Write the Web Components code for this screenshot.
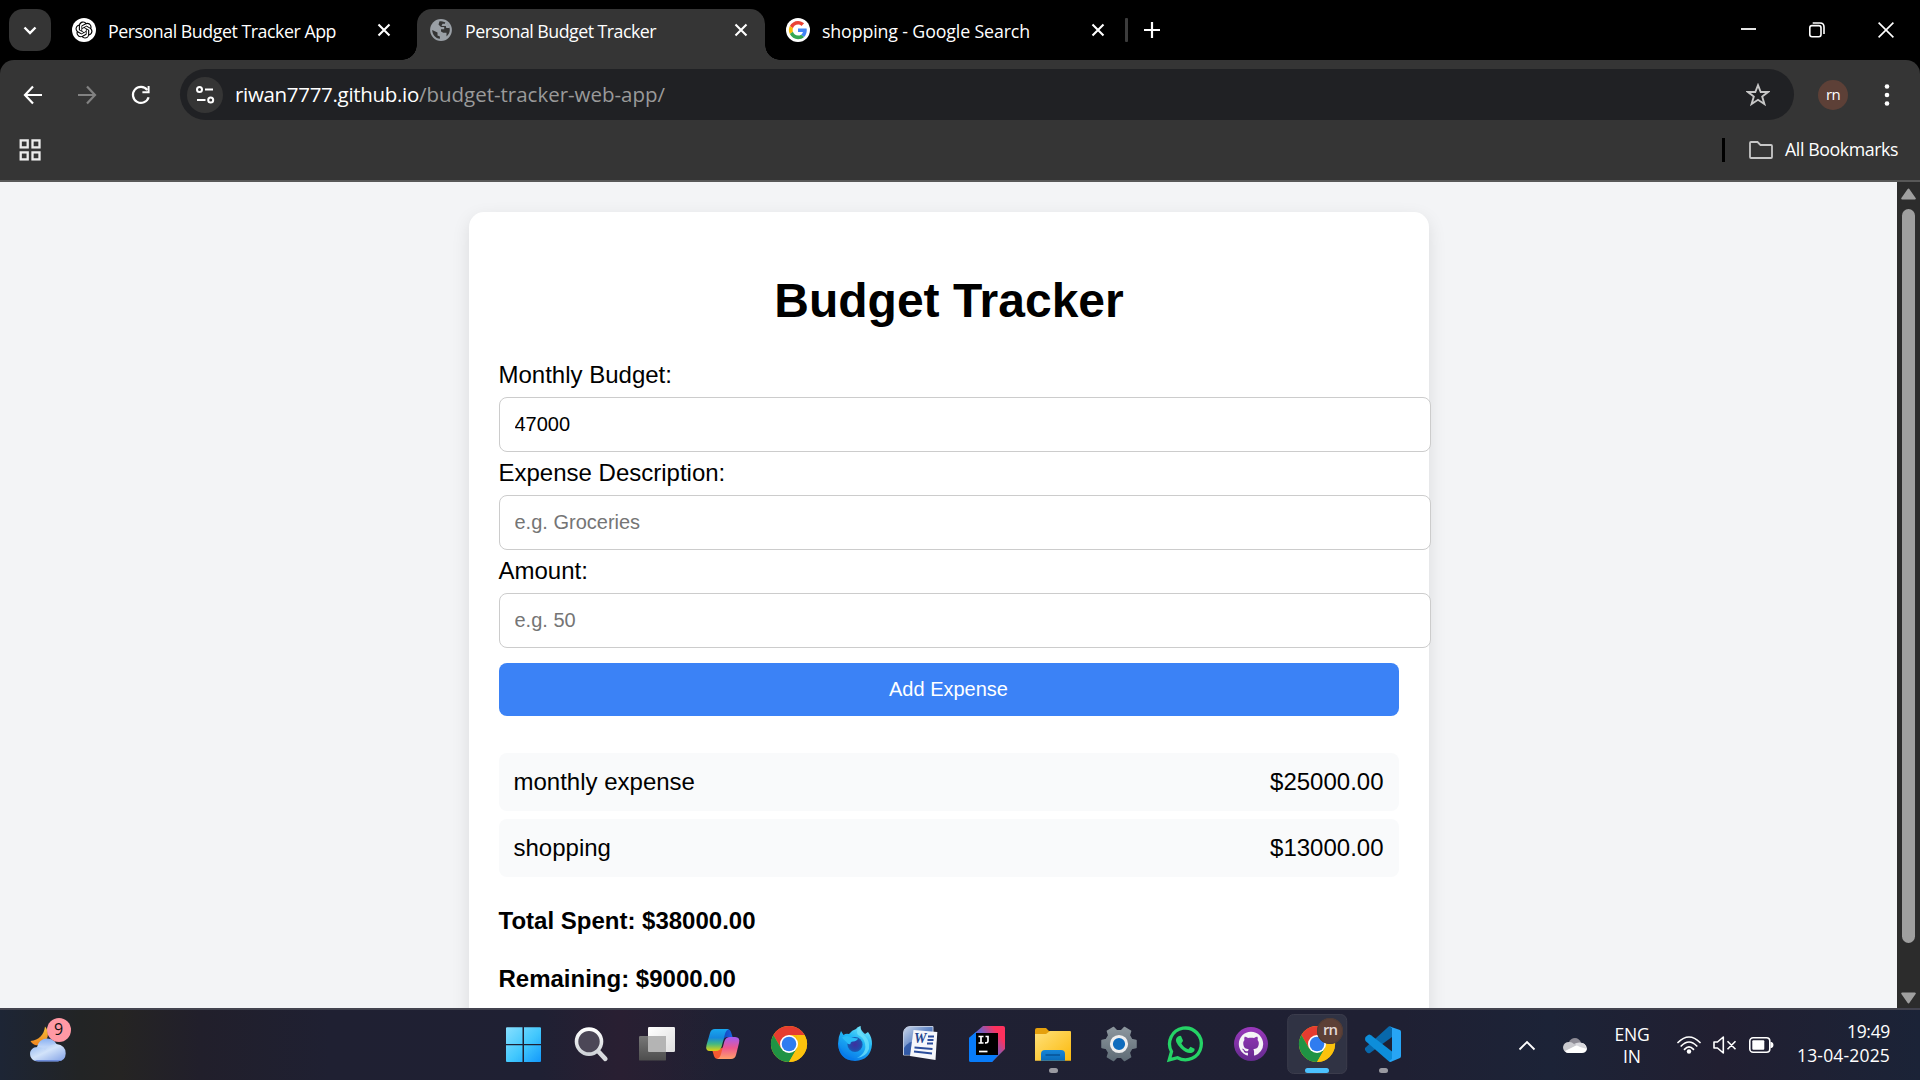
<!DOCTYPE html>
<html lang="en">
<head>
<meta charset="utf-8">
<title>Personal Budget Tracker</title>
<style>
html,body{margin:0;height:100%;overflow:hidden;background:#000}
body{font-family:"Open Sans","Noto Sans",sans-serif;color:#fff}
</style>
</head>
<body>
<desktop-screen></desktop-screen>
<script>
const define = (name, css, html, ready) => {
  const template = document.createElement('template');
  template.innerHTML = `<style>*{box-sizing:border-box}${css}</style>${html}`;
  customElements.define(name, class extends HTMLElement {
    constructor() {
      super();
      this.attachShadow({ mode: 'open' });
    }
    connectedCallback() {
      if (this.shadowRoot.childNodes.length) return;
      this.shadowRoot.append(document.importNode(template.content, true));
      if (ready) ready.call(this, this.shadowRoot);
    }
  });
};

const chromeLogo = `<circle cx="33" cy="34" r="18" fill="#fbbc04"/>
<path d="M17.4 25A18 18 0 0 1 48.6 25H33L25.2 38.5Z" fill="#e63c30"/>
<path d="M17.4 25A18 18 0 0 0 33 52L40.8 38.5L33 34L25.2 38.5Z" fill="#1f9344"/>
<path d="M48.6 25A18 18 0 0 1 33 52L40.8 38.5L41 25Z" fill="#fcc20d"/>
<circle cx="33" cy="34" r="9" fill="#fff"/><circle cx="33" cy="34" r="7.3" fill="#2f7cf0"/>`;

const gear = (() => {
  const points = [];
  for (let i = 0; i < 6; i++) {
    const a = i * 60;
    for (const [d, r] of [[-20, 13.4], [-12, 17.4], [12, 17.4], [20, 13.4]]) {
      const t = (a + d) * Math.PI / 180;
      points.push((33 + r * Math.cos(t)).toFixed(1) + ' ' + (34 + r * Math.sin(t)).toFixed(1));
    }
  }
  return 'M' + points.join('L') + 'Z';
})();

/* name: [width, height, viewBox, markup] */
const icons = {
  down: [14, 9, '0 0 14 9', '<path d="M1.5 1.5L7 7L12.5 1.5" fill="none" stroke="#fff" stroke-width="2.4"/>'],
  openai: [24, 24, '0 0 24 24', '<circle cx="12" cy="12" r="12" fill="#fff"/><path transform="translate(3.5 3.5) scale(.71)" fill="#000" d="M22.2819 9.8211a5.9847 5.9847 0 0 0-.5157-4.9108 6.0462 6.0462 0 0 0-6.5098-2.9A6.0651 6.0651 0 0 0 4.9807 4.1818a5.9847 5.9847 0 0 0-3.9977 2.9 6.0462 6.0462 0 0 0 .7427 7.0966 5.98 5.98 0 0 0 .511 4.9107 6.051 6.051 0 0 0 6.5146 2.9001A5.9847 5.9847 0 0 0 13.2599 24a6.0557 6.0557 0 0 0 5.7718-4.2058 5.9894 5.9894 0 0 0 3.9977-2.9001 6.0557 6.0557 0 0 0-.7475-7.0729zm-9.022 12.6081a4.4755 4.4755 0 0 1-2.8764-1.0408l.1419-.0804 4.7783-2.7582a.7948.7948 0 0 0 .3927-.6813v-6.7369l2.02 1.1686a.071.071 0 0 1 .038.052v5.5826a4.504 4.504 0 0 1-4.4945 4.4944zm-9.6607-4.1254a4.4708 4.4708 0 0 1-.5346-3.0137l.142.0852 4.783 2.7582a.7712.7712 0 0 0 .7806 0l5.8428-3.3685v2.3324a.0804.0804 0 0 1-.0332.0615L9.74 19.9502a4.4992 4.4992 0 0 1-6.1408-1.6464zM2.3408 7.8956a4.485 4.485 0 0 1 2.3655-1.9728V11.6a.7664.7664 0 0 0 .3879.6765l5.8144 3.3543-2.0201 1.1685a.0757.0757 0 0 1-.071 0l-4.8303-2.7865A4.504 4.504 0 0 1 2.3408 7.872zm16.5963 3.8558L13.1038 8.364 15.1192 7.2a.0757.0757 0 0 1 .071 0l4.8303 2.7913a4.4944 4.4944 0 0 1-.6765 8.1042v-5.6772a.79.79 0 0 0-.407-.667zm2.0107-3.0231l-.142-.0852-4.7735-2.7818a.7759.7759 0 0 0-.7854 0L9.409 9.2297V6.8974a.0662.0662 0 0 1 .0284-.0615l4.8303-2.7866a4.4992 4.4992 0 0 1 6.6802 4.66zM8.3065 12.863l-2.02-1.1638a.0804.0804 0 0 1-.038-.0567V6.0742a4.4992 4.4992 0 0 1 7.3757-3.4537l-.142.0805L8.704 5.459a.7948.7948 0 0 0-.3927.6813zm1.0976-2.3654l2.602-1.4998 2.6069 1.4998v2.9994l-2.5974 1.4997-2.6067-1.4997Z"/>'],
  globe: [22, 22, '0 0 22 22', '<circle cx="11" cy="11" r="10.9" fill="#9aa0a6"/><path d="M9.5 2.3 8.500 5.500l2.500 2.400h3.200v2.300H11v2.300l2.300 1.200h3.200v3.800c2-1.700 3.300-4 3.300-6.700C19.800 6 16 2.200 11 2.200ZM2.200 10.900 7.500 13.600v2.800l2.400 1.200v2.100C5.500 19.300 2.300 15.500 2.200 10.900Z" fill="#353535"/><path d="M12 2.200h3v2.600h-2.500l-1 2.100h4.300l.5 2h3.500C19 5 16 2.500 12 2.200Z" fill="#9aa0a6"/>'],
  google: [24, 24, '0 0 24 24', '<circle cx="12" cy="12" r="12" fill="#fff"/><g transform="translate(2.9 2.9) scale(.38)"><path fill="#EA4335" d="M24 9.5c3.54 0 6.71 1.22 9.21 3.6l6.85-6.85C35.9 2.38 30.47 0 24 0 14.62 0 6.51 5.38 2.56 13.22l7.98 6.19C12.43 13.72 17.74 9.5 24 9.5z"/><path fill="#4285F4" d="M46.98 24.55c0-1.57-.15-3.09-.38-4.55H24v9.02h12.94c-.58 2.96-2.26 5.48-4.78 7.18l7.73 6c4.51-4.18 7.09-10.36 7.09-17.65z"/><path fill="#FBBC05" d="M10.53 28.59a14.5 14.5 0 0 1 0-9.18l-7.98-6.19a24 24 0 0 0 0 21.56z"/><path fill="#34A853" d="M24 48c6.48 0 11.93-2.13 15.89-5.81l-7.73-6c-2.15 1.45-4.92 2.3-8.16 2.3-6.26 0-11.57-4.22-13.47-9.91l-7.98 6.19C6.51 42.62 14.62 48 24 48z"/></g>'],
  close: [14, 14, '0 0 14 14', '<path d="M1.5 1.5L12.5 12.5M12.5 1.5L1.5 12.5" stroke="#fff" stroke-width="2.1"/>'],
  plus: [16, 16, '0 0 16 16', '<path d="M8 0V16M0 8H16" stroke="#fff" stroke-width="2.2"/>'],
  min: [15, 15, '0 0 15 15', '<path d="M0 7H15" stroke="#fff" stroke-width="1.8"/>'],
  restore: [16, 16, '0 0 16 16', '<rect x=".8" y="3.6" width="11.2" height="11.2" rx="2.2" fill="none" stroke="#fff" stroke-width="1.6"/><path d="M3.7 1H11Q15 1 15 5V12" fill="none" stroke="#fff" stroke-width="1.6"/>'],
  winclose: [16, 16, '0 0 16 16', '<path d="M.6.6L15.4 15.4M15.4.6L.6 15.4" stroke="#fff" stroke-width="1.6"/>'],
  back: [20, 20, '0 0 20 20', '<path d="M19 10H2.5M10 1.5L2 10L10 18.5" fill="none" stroke="#fff" stroke-width="2.2"/>'],
  forward: [20, 20, '0 0 20 20', '<path d="M1 10H17.5M10 1.5L18 10L10 18.5" fill="none" stroke="#828282" stroke-width="2.2"/>'],
  reload: [20, 20, '0 0 20 20', '<path d="M17.6 12.2A8 8 0 1 1 16.3 5" fill="none" stroke="#fff" stroke-width="2.2"/><path d="M18.6 1V8.2H11.4V6.2H16.6V1Z" fill="#fff"/>'],
  tune: [20, 20, '0 0 20 20', '<g fill="none" stroke="#fff" stroke-width="2"><circle cx="4.5" cy="4.500" r="2.500"/><circle cx="15.700" cy="15" r="2.500"/><path d="M10 4.500H18M2 15H10.500"/></g>'],
  star: [24, 24, '0 0 24 24', '<path d="M12 2.2L14.7 9H22L16.2 13.6L18.4 21L12 16.8L5.6 21L7.8 13.6L2 9H9.3Z" fill="none" stroke="#c7c7c7" stroke-width="1.9"/>'],
  dots: [6, 24, '0 0 6 24', '<g fill="#fff"><circle cx="3" cy="3.5" r="2.3"/><circle cx="3" cy="12" r="2.3"/><circle cx="3" cy="20.5" r="2.3"/></g>'],
  apps: [22, 22, '0 0 22 22', '<g fill="none" stroke="#ececec" stroke-width="2.3"><rect x="1.7" y="1.4" width="7" height="7"/><rect x="13.5" y="1.4" width="7" height="7"/><rect x="1.7" y="13.4" width="7" height="7"/><rect x="13.5" y="13.4" width="7" height="7"/></g>'],
  folder: [24, 18, '0 0 24 18', '<path d="M1 16V2Q1 1 2 1H8.5L11.5 4H22Q23 4 23 5V16Q23 17 22 17H2Q1 17 1 16Z" fill="none" stroke="#c7c7c7" stroke-width="1.8"/>'],
  scrollup: [15, 12, '0 0 15 12', '<path d="M7.5 1.5L13.8 10.5H1.2Z" fill="#9f9f9f" stroke="#9f9f9f" stroke-width="2" stroke-linejoin="round"/>'],
  scrolldown: [15, 12, '0 0 15 12', '<path d="M7.5 10.5L13.8 1.5H1.2Z" fill="#9f9f9f" stroke="#9f9f9f" stroke-width="2" stroke-linejoin="round"/>'],
  weather: [40, 38, '0 0 40 38', '<defs><linearGradient id="m" x2="0" y2="1"><stop stop-color="#f5c23c"/><stop offset="1" stop-color="#f0851d"/></linearGradient><linearGradient id="c" x2="0" y2="1"><stop stop-color="#89b0f2"/><stop offset=".5" stop-color="#c0d6f8"/><stop offset="1" stop-color="#b9cff6"/></linearGradient><linearGradient id="d" x1="0" x2="1" y2="1"><stop stop-color="#8eb4ef"/><stop offset=".45" stop-color="#d2e3fa"/><stop offset="1" stop-color="#7f9fe5"/></linearGradient></defs><path d="M15 2.500C20 8 19 18 9 21Q3 22 .5 17C9 16 14 11 15 2.500Z" fill="url(#m)"/><path d="M7 23Q9 14.500 17.500 14.500Q26 15 28 24L18 31Z" fill="url(#c)"/><path d="M8 37.300C-2.500 37 -2.500 23 7.500 23Q12 23 15 26Q19 20 26.500 20Q35.700 21 35.700 29.500Q35.500 37 28 37.300Z" fill="url(#d)"/><path d="M4 36H32L28 37.400H8Z" fill="#6d8cda"/>'],
  start: [66, 70, '0 0 66 70', '<defs><linearGradient id="g" x1="14" y1="17" x2="49" y2="52" gradientUnits="userSpaceOnUse"><stop stop-color="#88e0ff"/><stop offset=".55" stop-color="#41c7fd"/><stop offset="1" stop-color="#1298fb"/></linearGradient></defs><path fill="url(#g)" d="M15 17.2H30.5V34H14V18.2Q14 17.2 15 17.2ZM32 17.2H48Q49 17.2 49 18.2V34H32ZM14 35.3H30.5V52H15Q14 52 14 51ZM32 35.3H49V51Q49 52 48 52H32Z"/>'],
  search: [66, 70, '0 0 66 70', '<defs><linearGradient id="s" x2="0" y2="1"><stop stop-color="#fff"/><stop offset="1" stop-color="#cfd3d8"/></linearGradient></defs><path d="M39.5 40.5L47.3 48.8" stroke="#d8dade" stroke-width="4.6" stroke-linecap="round"/><circle cx="31" cy="31.6" r="12.5" fill="#4c4757" stroke="url(#s)" stroke-width="3.6"/>'],
  tasks: [66, 70, '0 0 66 70', '<defs><linearGradient id="w" x2="1" y2="1"><stop stop-color="#fff"/><stop offset="1" stop-color="#dedede"/></linearGradient><linearGradient id="q" x2="0" y2="1"><stop stop-color="#777"/><stop offset="1" stop-color="#4d4d4d"/></linearGradient></defs><rect x="24" y="17" width="27" height="25" rx="1.2" fill="url(#w)"/><rect x="15" y="26" width="27" height="24.6" rx="1.2" fill="url(#q)"/><path d="M24 26H42V42H25Q24 42 24 41Z" fill="#b4b4b4"/>'],
  copilot: [66, 70, '0 0 66 70', '<defs><linearGradient id="a" x2="0" y2="1"><stop stop-color="#18a7ef"/><stop offset=".4" stop-color="#1588dd"/><stop offset=".68" stop-color="#42b883"/><stop offset="1" stop-color="#e1d30f"/></linearGradient><linearGradient id="b" x2="0" y2="1"><stop stop-color="#a45cf2"/><stop offset=".5" stop-color="#ed588e"/><stop offset="1" stop-color="#ffa06a"/></linearGradient><linearGradient id="e" x2="1"><stop stop-color="#153fb9"/><stop offset="1" stop-color="#1766e0"/></linearGradient></defs><path d="M32 19H37Q40 19 41 22L42.6 27H38Q34 27 33 31Z" fill="url(#e)"/><path d="M25 41L34 37L31 49H28Q25 49 24 46L22.5 41Z" fill="#f65931"/><path d="M25 19H39Q36 20 35 24L31.500 37Q30 41 26 41H20Q15 41 16.500 35L20 23Q21 19 25 19Z" fill="url(#a)"/><path d="M41 49H27Q30 48 31 44L34.500 31Q36 27 40 27H45Q50.500 27 49 33L46 45Q45 49 41 49Z" fill="url(#b)"/>'],
  chrome: [66, 70, '0 0 66 70', chromeLogo],
  firefox: [66, 70, '0 0 66 70', '<defs><linearGradient id="f" x1=".8" y1="0" x2=".3" y2="1"><stop stop-color="#7ee9f9"/><stop offset=".4" stop-color="#22b8f6"/><stop offset="1" stop-color="#0574e8"/></linearGradient><radialGradient id="h"><stop stop-color="#3f2f9e"/><stop offset=".7" stop-color="#2448a8"/><stop offset="1" stop-color="#1560b8"/></radialGradient></defs><path d="M19 21L21.5 25Q24 23 27 24Q30 20 34 19Q35 17 38.500 16Q38 20 43 24L46 22Q50 27 50 34Q49 50 33 51Q17 50 16 34Q16 27 19 21Z" fill="url(#f)"/><path d="M38.500 16Q37.500 22 43 26Q48 31 47 39Q44 47 35 48Q46 42 42.500 32Q41 27 36 25Q33 20 38.500 16Z" fill="#6fe3fb" opacity=".75"/><circle cx="33" cy="34.500" r="7.600" fill="url(#h)"/><path d="M20 27.500Q25 24.500 28.500 27.500L36 28.500Q35 31 31 31.500Q28 32 28.500 34Q26 35 24.500 32Q22 30 20 27.500Z" fill="#2abcf8"/><path d="M16 32Q20 47 34 49Q26 53 20 45Q16 40 16 32Z" fill="#057ceb" opacity=".6"/>'],
  word: [66, 70, '0 0 66 70', '<defs><linearGradient id="v" x2="1" y2="1"><stop stop-color="#cdd8ea"/><stop offset=".45" stop-color="#668ac8"/><stop offset="1" stop-color="#173f91"/></linearGradient></defs><path d="M22 16.5H45V45H15.5V23Q16 17 22 16.5Z" fill="url(#v)" stroke="#c0cbe0" stroke-width="1"/><path d="M16 38Q20 31 31 30V45H16Z" fill="#1f499b" opacity=".7"/><path d="M25.5 20L49.300 22L47.500 50L22 46Z" fill="#f6f7fb"/><path d="M40 26.500H46M39.500 30H45.500M39 33.500H45M26.500 37.500L44.500 39M26 41.500L44 43.500" stroke="#2b4d9b" stroke-width="2"/>'],
  idea: [66, 70, '0 0 66 70', '<defs><linearGradient id="i" x1=".15" y1=".7" x2="1" y2=".1"><stop stop-color="#087cfa"/><stop offset=".45" stop-color="#7560c2"/><stop offset=".8" stop-color="#fe315d"/></linearGradient></defs><path d="M29 16H49Q51 16 51 18V39L38 52H17Q15 52 15 50V28Z" fill="url(#i)"/><path d="M15 28L22 22V45H44L38 52H17Q15 52 15 50Z" fill="#087cfa"/><rect x="22" y="23" width="22" height="22"/><path d="M24.5 26.5H29.5M27 26.5V33M24.5 33H29.5M31.5 26.5H34V31Q34 33 31 32.8" fill="none" stroke="#fff" stroke-width="1.7"/><path d="M25 41.5H33.5" stroke="#fff" stroke-width="1.7"/>'],
  explorer: [66, 70, '0 0 66 70', '<defs><linearGradient id="j" x2="1" y2="1"><stop stop-color="#ffe17a"/><stop offset="1" stop-color="#fbb90c"/></linearGradient><linearGradient id="k" x2="0" y2="1"><stop stop-color="#1686d8"/><stop offset="1" stop-color="#0b6bb9"/></linearGradient></defs><path d="M15 20Q15 18 17 18H26L29 21H44V27L15 27Z" fill="#e5a00c"/><path d="M15 24H26L30 21H50Q51 21 51 22V50.7H15Z" fill="url(#j)"/><path d="M21 50.7V44Q21 40 25 40H41Q45 40 45 44V50.7Z" fill="url(#k)"/><path d="M25.5 45H40" stroke="#064f93" stroke-width="1.4"/><rect x="29" y="58" width="9" height="5" rx="2.5" fill="#9a9aa1"/>'],
  settings: [66, 70, '0 0 66 70', `<defs><linearGradient id="n" x2="0" y2="1"><stop stop-color="#8c969d"/><stop offset="1" stop-color="#5f6c76"/></linearGradient></defs><path d="${gear}" fill="url(#n)" stroke="url(#n)" stroke-width="1.500" stroke-linejoin="round"/><circle cx="33" cy="34" r="7.600" fill="#0f6cbd" stroke="#eee" stroke-width="3"/>`],
  whatsapp: [66, 70, '0 0 66 70', '<path d="M17.2 49.9L19.5 41.6A15.9 15.9 0 1 1 25.500 47.700Z" fill="none" stroke="#25d366" stroke-width="3.300"/><path d="M26.500 26.200Q28 25.400 29 26L31 30.500Q31 31.500 29.300 33.200Q31.500 37.600 36.300 39.200L38.500 36.800L42.500 38.800Q43 41.500 40.500 42.500Q35.500 44.500 29 38.500Q22 31.500 24.500 28Q25.300 26.600 26.500 26.200Z" fill="#25d366"/>'],
  github: [66, 70, '0 0 66 70', '<defs><linearGradient id="o" x2="0" y2="1"><stop stop-color="#9a38bc"/><stop offset="1" stop-color="#642b8e"/></linearGradient></defs><circle cx="33" cy="34" r="17" fill="url(#o)"/><path transform="translate(20.800 21.800) scale(1.525)" fill="#f4f4f6" d="M8 0C3.58 0 0 3.58 0 8c0 3.54 2.29 6.53 5.47 7.59.4.07.55-.17.55-.38 0-.19-.01-.82-.01-1.49-2.01.37-2.53-.49-2.69-.94-.09-.23-.48-.94-.82-1.13-.28-.15-.68-.52-.01-.53.63-.01 1.08.58 1.23.82.72 1.21 1.87.87 2.33.66.07-.52.28-.87.51-1.07-1.78-.2-3.64-.89-3.64-3.95 0-.87.31-1.59.82-2.15-.08-.2-.36-1.02.08-2.12 0 0 .67-.21 2.2.82.64-.18 1.32-.27 2-.27s1.36.09 2 .27c1.53-1.04 2.2-.82 2.2-.82.44 1.1.16 1.92.08 2.12.51.56.82 1.27.82 2.15 0 3.07-1.87 3.75-3.65 3.95.29.25.54.73.54 1.48 0 1.07-.01 1.93-.01 2.2 0 .21.15.46.55.38A8.013 8.013 0 0 0 16 8c0-4.42-3.58-8-8-8z"/>'],
  chromeactive: [66, 70, '0 0 66 70', `<rect x="3.7" y="4.5" width="59" height="59" rx="6" fill="#303344" stroke="#3b3c4c"/>${chromeLogo}<rect x="21" y="58" width="24" height="5" rx="2.5" fill="#4cc2ff"/>`],
  vscode: [66, 70, '0 0 66 70', '<path d="M15 38L39 16.3L42 17V27L20 43Q18 44 16.5 42L15 40Z" fill="#0868ab"/><path d="M15.500 27L18 25Q19.300 24 21 25.300L42 41.500V51L39 51.500L15.500 31Q14.500 29 15.500 27Z" fill="#0d8eda"/><path d="M39 16.300L50 20Q51 20.500 51 22V46Q51 47.500 50 48L40.500 52Q39 51.500 39 51L42 49V18Z" fill="#27a5f5"/><rect x="29" y="58" width="9" height="5" rx="2.500" fill="#9a9aa1"/>'],
  chevron: [18, 11, '0 0 18 11', '<path d="M1.5 9.5L9 2L16.5 9.5" fill="none" stroke="#fff" stroke-width="1.8"/>'],
  onedrive: [24, 17, '0 0 24 17', '<path d="M6 5Q8 1 12 1Q16 1 18 5.5L12 10Z" fill="#8d8b95"/><path d="M5 16Q0 15 0 10Q1 5 6 5Q8.5 4.5 11 7L17 10L5 16Z" fill="#cacacf"/><path d="M2 14L15 7.5Q18 5 21.5 7Q24 9 24 12Q23 16 19 16H5Q3 16 2 14Z" fill="#fff"/><path d="M11 7Q14 5 17.5 5.5Q20.5 6 21.5 7.5L24 12L17 10Z" fill="#d9d9de"/>'],
  wifi: [24, 18, '0 0 24 18', '<g fill="none" stroke="#fff" stroke-width="1.7" stroke-linecap="round"><path d="M1 6.5Q12-4.5 23 6.5M4.2 10Q12 2 19.8 10M7.5 13.3Q12 8.5 16.5 13.3"/></g><circle cx="12" cy="15.5" r="2.2" fill="#fff"/>'],
  mute: [24, 18, '0 0 24 18', '<path d="M1 6H4.5L10.3 1V17L4.5 12H1ZM14.5 5.2L22.5 13.2M22.5 5.2L14.5 13.2" fill="none" stroke="#fff" stroke-width="1.6" stroke-linejoin="round"/>'],
  battery: [25, 16, '0 0 25 16', '<rect x=".8" y=".8" width="20" height="14.4" rx="3.3" fill="none" stroke="#fff" stroke-width="1.6"/><rect x="3.3" y="3.3" width="12" height="9.4" rx="1" fill="#fff"/><path d="M21.5 5H22.5Q24.5 5.500 24.500 8T22.500 11H21.500Z" fill="#fff"/>']
};

define('ui-icon', ':host{display:block;flex:none}svg{display:block}', '', function (root) {
  const [w, h, box, body] = icons[this.getAttribute('name')];
  const holder = document.createElement('template');
  holder.innerHTML = `<svg width="${w}" height="${h}" viewBox="${box}">${body}</svg>`;
  root.append(holder.content);
});

/* A single line of text tracked out or in to fill the given width. */
define('fit-text', ':host{display:inline-block;white-space:pre;flex:none}span{display:inline-block}', '<span><slot></slot></span>', function (root) {
  const span = root.querySelector('span');
  const target = +this.getAttribute('w');
  const natural = span.getBoundingClientRect().width;
  if (natural) span.style.letterSpacing = (target - natural) / this.textContent.length + 'px';
});

define('browser-tab', `
:host{display:flex;align-items:center;height:51px;width:348px;padding:0 17px 9px 12px;border-radius:15px 15px 0 0;font-size:17.8px;position:relative;margin-top:9px}
:host([active]){background:#353535}
:host([active])::before,:host([active])::after{content:"";position:absolute;bottom:0;width:15px;height:15px}
:host([active])::before{left:-15px;background:radial-gradient(circle at 0 0,transparent 14.5px,#353535 15px)}
:host([active])::after{right:-15px;background:radial-gradient(circle at 100% 0,transparent 14.5px,#353535 15px)}
.label{flex:1;margin-left:12px;line-height:24px;padding-top:2px}
.icon{width:24px;display:grid;place-items:center}`,
'<div class="icon"></div><div class="label"><slot></slot></div><ui-icon name="close"></ui-icon>',
function (root) {
  const icon = document.createElement('ui-icon');
  icon.setAttribute('name', this.getAttribute('icon'));
  root.querySelector('.icon').append(icon);
});
</script>
<script>
define('tab-strip', `
:host{display:flex;height:60px;background:#000;align-items:flex-start}
.menu{width:42px;height:42px;margin:9px 0 0 9px;border-radius:14px;background:#353535;display:grid;place-items:center}
browser-tab{margin-left:9px}
.rule{width:3px;height:24px;background:#3c3c3c;margin:18px 0 0 3px;border-radius:1px}
.plus{margin:22px 0 0 16px}
.win{display:flex;gap:53px;margin:22px 26px 0 auto}`,
`<div class="menu"><ui-icon name="down"></ui-icon></div>
<browser-tab icon="openai"><fit-text w="228">Personal Budget Tracker App</fit-text></browser-tab>
<browser-tab icon="globe" active><fit-text w="191">Personal Budget Tracker</fit-text></browser-tab>
<browser-tab icon="google"><fit-text w="208">shopping - Google Search</fit-text></browser-tab>
<div class="rule"></div><ui-icon class="plus" name="plus"></ui-icon>
<div class="win"><ui-icon name="min"></ui-icon><ui-icon name="restore"></ui-icon><ui-icon name="winclose"></ui-icon></div>`);

define('nav-bar', `
:host{display:block;background:#000}
.bar{display:flex;height:69px;background:#353535;border-radius:14px 14px 0 0;align-items:center;padding:0 30px 0 23px}
.arrows{display:flex;gap:34px;width:157px}
.omni{width:1614px;height:51px;border-radius:26px;background:#202124;display:flex;align-items:center;padding:0 24px 0 7px}
.site{width:36px;height:36px;border-radius:50%;background:#353535;display:grid;place-items:center;margin-right:12px}
.url{flex:1;font-size:20.5px;line-height:30px;display:flex;padding-bottom:1px}
.path{color:#9a9a9a}
.avatar{width:30px;height:30px;border-radius:50%;background:#5d4037;font-size:15px;line-height:28px;text-align:center;margin:0 36px 0 24px}`,
`<div class="bar"><div class="arrows"><ui-icon name="back"></ui-icon><ui-icon name="forward"></ui-icon><ui-icon name="reload"></ui-icon></div>
<div class="omni"><div class="site"><ui-icon name="tune"></ui-icon></div>
<div class="url"><fit-text w="184">riwan7777.github.io</fit-text><fit-text class="path" w="246">/budget-tracker-web-app/</fit-text></div>
<ui-icon name="star"></ui-icon></div>
<div class="avatar"><fit-text w="14">rn</fit-text></div><ui-icon name="dots"></ui-icon></div>`);

define('bookmark-bar', `
:host{display:flex;box-sizing:border-box;height:53px;background:#353535;align-items:center;padding:0 22px 10px 19px;border-bottom:2px solid #585858;font-size:17.8px}
.rule{width:3px;height:24px;background:#000;margin-left:auto;margin-right:24px}
fit-text{margin:0 0 2px 12px;line-height:26px}`,
`<ui-icon name="apps"></ui-icon><div class="rule"></div><ui-icon name="folder"></ui-icon><fit-text w="113">All Bookmarks</fit-text>`);

define('form-field', `
:host{display:block;height:98px}
label{display:block;height:36px;font-size:24px;line-height:28px}
input{display:block;box-sizing:content-box;width:100%;height:23px;padding:15px;border:1px solid #ccc;border-radius:8px;font:20px/23px "Liberation Sans",sans-serif;color:#000;background:#fff;outline:0}
input::placeholder{color:#757575}`,
'<label></label><input>', function (root) {
  root.querySelector('label').textContent = this.getAttribute('label');
  const input = root.querySelector('input');
  input.value = this.getAttribute('value') || '';
  input.placeholder = this.getAttribute('placeholder') || '';
});

define('expense-item', `
:host{display:flex;box-sizing:border-box;justify-content:space-between;height:58px;padding:15px;background:#f9fafb;border-radius:8px;margin-bottom:8px;line-height:28px}`,
'<slot></slot><slot name="amount"></slot>');

define('budget-card', `
:host{display:block;box-sizing:border-box;width:960px;height:900px;padding:30px;background:#fff;border-radius:15px;box-shadow:0 6px 18px rgba(0,0,0,.1);font:24px "Liberation Sans",sans-serif;color:#000}
h1{font-size:48px;line-height:55px;margin:31px 0 33px;padding-left:1px;text-align:center}
button{display:block;width:900px;height:53px;margin:8px 0 37px;border:0;border-radius:8px;background:#3b82f6;color:#fff;font:20px "Liberation Sans",sans-serif;padding:0}
p{margin:0;font-weight:700;line-height:28px}
.totals{display:flex;flex-direction:column;gap:30px;margin-top:30px}`,
`<h1>Budget Tracker</h1>
<form-field label="Monthly Budget:" value="47000"></form-field>
<form-field label="Expense Description:" placeholder="e.g. Groceries"></form-field>
<form-field label="Amount:" placeholder="e.g. 50"></form-field>
<button>Add Expense</button>
<expense-item><span>monthly expense</span><span slot="amount">$25000.00</span></expense-item>
<expense-item><span>shopping</span><span slot="amount">$13000.00</span></expense-item>
<div class="totals"><p>Total Spent: $38000.00</p><p>Remaining: $9000.00</p></div>`);

define('scroll-rail', `
:host{display:flex;box-sizing:border-box;flex-direction:column;align-items:center;width:23px;height:826px;background:#2c2c2c;padding:6px 0 4px}
.thumb{width:13px;height:734px;border-radius:7px;background:#9f9f9f;margin:9px 0 auto}`,
'<ui-icon name="scrollup"></ui-icon><div class="thumb"></div><ui-icon name="scrolldown"></ui-icon>');

define('page-view', `
:host{display:flex;height:826px;overflow:hidden;background:#f3f4f6}
main{flex:1;height:826px;overflow:hidden;display:flex;justify-content:center;align-items:flex-start;padding-top:30px}`,
'<main><budget-card></budget-card></main><scroll-rail></scroll-rail>');

define('weather-widget', `
:host{display:block;width:40px;height:38px;position:relative;margin:14px 0 0 30px}
.badge{position:absolute;left:16.5px;top:-6px;width:24px;height:24px;border-radius:50%;background:#ff99a4;color:#111;font-size:16px;line-height:23px;text-align:center}`,
'<ui-icon name="weather"></ui-icon><div class="badge">9</div>');

define('task-button', `
:host{display:block;width:66px;height:70px;position:relative}
.badge{position:absolute;left:33px;top:8px;width:26px;height:26px;border-radius:50%;background:#5d4037;box-shadow:inset 0 0 0 1px #503c36;color:#e4d9d6;font-size:15px;font-weight:600;line-height:22px;text-align:center;letter-spacing:-1px}
.w{position:absolute;left:26px;top:21px;font:italic 700 14px/16px "Liberation Serif",serif;color:#23468f}`,
'', function (root) {
  const name = this.getAttribute('icon');
  const icon = document.createElement('ui-icon');
  icon.setAttribute('name', name);
  root.append(icon);
  if (name === 'chromeactive' || name === 'word') {
    const mark = document.createElement('div');
    mark.className = name === 'word' ? 'w' : 'badge';
    mark.textContent = name === 'word' ? 'W' : 'rn';
    root.append(mark);
  }
});

define('system-tray', `
:host{display:flex;box-sizing:border-box;height:70px;align-items:center;margin-left:auto;font-size:17.5px;line-height:24px;padding-right:30px}
.lang{width:60px;text-align:center;margin:0 15px 0 15px;line-height:22px}
.status{display:flex;gap:12px;align-items:center}
.clock{text-align:right;width:94px;margin-left:22px;padding-bottom:4px}
.lang,.clock{display:flex;flex-direction:column}
.lang{align-items:center}.clock{align-items:flex-end}`,
`<ui-icon name="chevron" style="margin-right:27px"></ui-icon><ui-icon name="onedrive"></ui-icon>
<div class="lang"><fit-text w="35">ENG</fit-text><fit-text w="18">IN</fit-text></div>
<div class="status"><ui-icon name="wifi"></ui-icon><ui-icon name="mute"></ui-icon><ui-icon name="battery"></ui-icon></div>
<div class="clock"><fit-text w="43">19:49</fit-text><fit-text w="93">13-04-2025</fit-text></div>`);

define('task-bar', `
:host{display:flex;box-sizing:border-box;height:72px;border-top:2px solid #43434f;background:linear-gradient(90deg,#1d2535 0,#222425 80px,#252423 120px,#211f2b 200px,#1f2032 330px,#1f2033 540px,#291f32 620px,#20213300 720px),linear-gradient(90deg,#202133 0,#1f2033 1400px,#1c2337 1550px,#211f31 1720px,#1b2337 1920px)}
nav{display:flex;margin-left:422px}`,
`<weather-widget></weather-widget><nav>${['start','search','tasks','copilot','chrome','firefox','word','idea','explorer','settings','whatsapp','github','chromeactive','vscode'].map(n => `<task-button icon="${n}"></task-button>`).join('')}</nav><system-tray></system-tray>`);

define('desktop-screen', ':host{display:flex;flex-direction:column;width:1920px;height:1080px;background:#000;overflow:hidden}',
'<tab-strip></tab-strip><nav-bar></nav-bar><bookmark-bar></bookmark-bar><page-view></page-view><task-bar></task-bar>');
</script>
</body>
</html>
